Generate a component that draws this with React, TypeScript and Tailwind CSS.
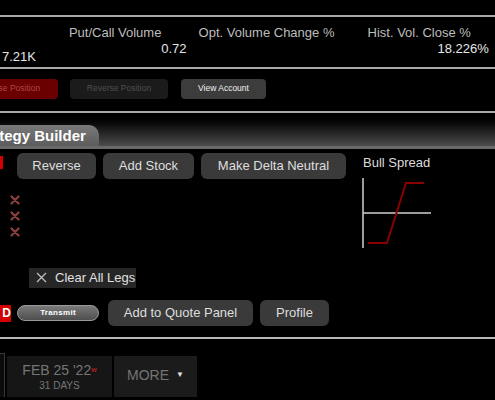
import React from 'react';

const Btn: React.FC<{ label: string; w: string }> = ({ label, w }) => (
  <button className={`${w} h-[26px] rounded-[6px] bg-[#3a3a3a] text-[13px] text-[#dedede] shadow-[0_1px_2px_rgba(0,0,0,0.6)]`}>
    {label}
  </button>
);

const LegX = () => (
  <svg width="10" height="10" viewBox="0 0 10 10" className="block">
    <path d="M1.5 1.5 L8.5 8.5 M8.5 1.5 L1.5 8.5" stroke="#8c3f3f" strokeWidth="2.2" strokeLinecap="round" />
  </svg>
);

export default function App() {
  return (
    <div className="relative w-[495px] h-[400px] overflow-hidden bg-black text-[#d8d8d8] font-['Liberation_Sans',Arial,sans-serif]">
      {/* top divider */}
      <div className="h-[15px]" />
      <div className="h-[2px] bg-[#a8a8a8]" />

      {/* stats */}
      <div className="flex h-[50px] text-[13px] leading-[16px]">
        <div className="w-[62px] pt-[32px] pl-[2px] text-[#e6e6e6]">7.21K</div>
        <div className="w-[130px] pt-[8px]">
          <div className="pl-[8px] text-[#bdbdbd]">Put/Call Volume</div>
          <div className="text-right pr-[2px] text-[#e6e6e6]">0.72</div>
        </div>
        <div className="w-[172px] pt-[8px]">
          <div className="pl-[10px] text-[#bdbdbd]">Opt. Volume Change %</div>
        </div>
        <div className="w-[140px] pt-[8px]">
          <div className="pl-[10px] text-[#bdbdbd] whitespace-nowrap">Hist. Vol. Close %</div>
          <div className="pl-[80px] text-[#e6e6e6] whitespace-nowrap">18.226%</div>
        </div>
      </div>
      <div className="h-[2px] bg-[#a8a8a8]" />

      {/* position buttons */}
      <div className="flex items-center h-[42px] pb-[3px] text-[8.5px]">
        <button className="-ml-[32px] w-[90px] h-[20px] rounded-[4px] bg-[#6a0000] text-[#b04848] whitespace-nowrap">Close Position</button>
        <button className="ml-[12px] w-[98px] h-[20px] rounded-[4px] bg-[#1b1b1b] text-[#4e4e4e]">Reverse Position</button>
        <button className="ml-[13px] w-[85px] h-[20px] rounded-[4px] bg-[#3c3c3c] text-[#f0f0f0]">View Account</button>
      </div>
      <div className="h-[2px] bg-[#a8a8a8]" />

      {/* tab strip */}
      <div className="h-[33px] flex items-end bg-gradient-to-b from-black via-[#1c1c1c] to-[#4c4c4c]">
        <div className="-ml-[36px] h-[21px] pl-[6px] pr-[13px] rounded-tr-[10px] bg-gradient-to-b from-[#7a7a7a] to-[#5c5c5c] text-[15px] font-bold text-white leading-[21px] whitespace-nowrap">
          Strategy Builder
        </div>
      </div>
      <div className="h-[3px] bg-[#6a6a6a]" />

      {/* builder */}
      <div className="flex h-[188px]">
        <div className="w-[362px]">
          <div className="flex items-start pt-[4px]">
            <div className="mt-[3px] w-[3px] h-[13px] bg-[#d40000]" />
            <div className="ml-[14px] flex gap-[7px]">
              <Btn label="Reverse" w="w-[79px]" />
              <Btn label="Add Stock" w="w-[91px]" />
              <Btn label="Make Delta Neutral" w="w-[145px]" />
            </div>
          </div>

          <div className="pl-[10px] pt-[16px] flex flex-col gap-[6px]">
            <LegX />
            <LegX />
            <LegX />
          </div>

          <div className="pl-[29px] mt-[29px]">
            <div className="inline-flex items-center h-[20px] w-[107px] bg-[#262626] pl-[7px] gap-[8px] text-[13px] text-[#e0e0e0]">
              <svg width="11" height="11" viewBox="0 0 11 11">
                <path d="M1 1 L10 10 M10 1 L1 10" stroke="#bdbdbd" strokeWidth="1.3" />
              </svg>
              <span>Clear All Legs</span>
            </div>
          </div>

          <div className="flex items-center mt-[10px] h-[26px]">
            <div className="w-[11px] h-[17px] bg-[#d40000] text-white text-[12px] font-bold leading-[17px] text-right overflow-hidden">
              D
            </div>
            <div className="ml-[6px] w-[82px] h-[16px] rounded-full border border-[#9a9a9a] bg-gradient-to-b from-[#7a7a7a] to-[#4e4e4e] text-[8px] font-bold tracking-[0.3px] text-white leading-[14px] text-center">
              Transmit
            </div>
            <div className="ml-[9px] flex gap-[7px]">
              <Btn label="Add to Quote Panel" w="w-[145px]" />
              <Btn label="Profile" w="w-[69px]" />
            </div>
          </div>
        </div>

        <div className="flex-1 pt-[6px]">
          <div className="pl-[1px] text-[13px] text-[#dcdcdc] leading-[16px]">Bull Spread</div>
          <svg width="80" height="75" viewBox="0 0 80 75" className="mt-[7px]">
            <line x1="1" y1="0" x2="1" y2="70" stroke="#d0d0d0" strokeWidth="1.5" />
            <line x1="1" y1="35" x2="69" y2="35" stroke="#d0d0d0" strokeWidth="1.5" />
            <polyline points="6,65 25,65 44,5 62,5" fill="none" stroke="#8a0000" strokeWidth="2" />
          </svg>
        </div>
      </div>

      <div className="h-[2px] bg-[#b8b8b8]" />

      {/* expiry tabs */}
      <div className="flex items-end h-[58px]">
        <div className="w-[5px] h-[44px] bg-[#0c0c0c] border-t border-r border-[#3a3a3a]" />
        <div className="ml-[2px] w-[105px] h-[41px] bg-[#161616] flex flex-col items-center pt-[6px] text-[#757575]">
          <div className="text-[14px] leading-[16px] whitespace-nowrap">
            FEB 25 '22<sup className="text-[7px] text-[#b02020] font-bold">w</sup>
          </div>
          <div className="text-[10px] leading-[12px] mt-[2px]">31 DAYS</div>
        </div>
        <div className="ml-[2px] w-[83px] h-[41px] bg-[#1b1b1b] flex items-center justify-center gap-[7px] pb-[3px] text-[#757575]">
          <span className="text-[14px]">MORE</span>
          <span className="text-[8px] text-[#e0e0e0]">▼</span>
        </div>
      </div>
    </div>
  );
}
